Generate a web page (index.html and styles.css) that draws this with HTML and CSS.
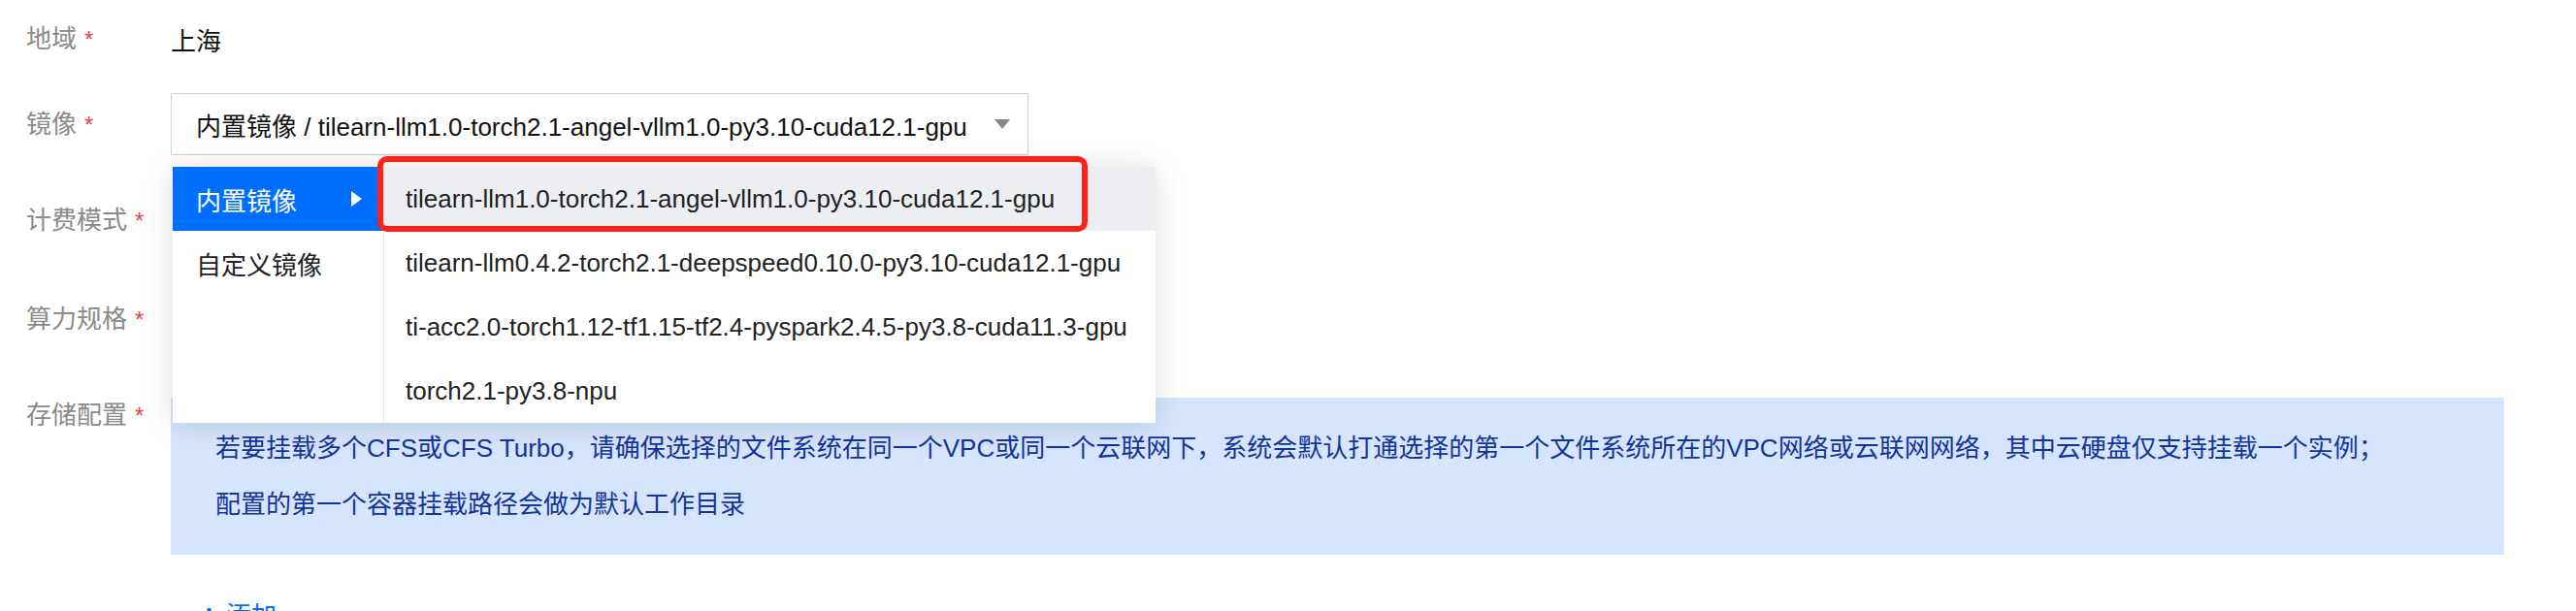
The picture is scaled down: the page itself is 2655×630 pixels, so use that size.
FILE: index.html
```html
<!DOCTYPE html>
<html lang="zh-CN">
<head>
<meta charset="utf-8">
<title>镜像选择</title>
<link rel="stylesheet" href="styles.css">
</head>
<body>
<form class="form">
  <div class="row row-region">
    <div class="label">地域<span class="req">*</span></div>
    <div class="value">上海</div>
  </div>

  <div class="row row-image">
    <div class="label">镜像<span class="req">*</span></div>
    <div class="select-wrap">
      <div class="select">
        <span class="select-text">内置镜像 / tilearn-llm1.0-torch2.1-angel-vllm1.0-py3.10-cuda12.1-gpu</span>
        <svg class="caret" width="16" height="10" viewBox="0 0 16 10"><polygon points="0,0 16,0 8,10" fill="#888"/></svg>
      </div>
      <div class="cascader">
        <ul class="menu menu-left">
          <li class="item active"><span>内置镜像</span><svg class="arrow" width="11" height="16" viewBox="0 0 11 16"><polygon points="0,0 11,8 0,16" fill="#fff"/></svg></li>
          <li class="item">自定义镜像</li>
        </ul>
        <ul class="menu menu-right">
          <li class="item hover">tilearn-llm1.0-torch2.1-angel-vllm1.0-py3.10-cuda12.1-gpu</li>
          <li class="item">tilearn-llm0.4.2-torch2.1-deepspeed0.10.0-py3.10-cuda12.1-gpu</li>
          <li class="item">ti-acc2.0-torch1.12-tf1.15-tf2.4-pyspark2.4.5-py3.8-cuda11.3-gpu</li>
          <li class="item">torch2.1-py3.8-npu</li>
        </ul>
        <div class="annot"></div>
      </div>
    </div>
  </div>

  <div class="row row-billing">
    <div class="label">计费模式<span class="req">*</span></div>
  </div>

  <div class="row row-spec">
    <div class="label">算力规格<span class="req">*</span></div>
  </div>

  <div class="row row-storage">
    <div class="label">存储配置<span class="req">*</span></div>
    <div class="storage">
      <div class="notice">
        <p>若要挂载多个CFS或CFS Turbo，请确保选择的文件系统在同一个VPC或同一个云联网下，系统会默认打通选择的第一个文件系统所在的VPC网络或云联网网络，其中云硬盘仅支持挂载一个实例；</p>
        <p>配置的第一个容器挂载路径会做为默认工作目录</p>
      </div>
      <a class="add" href="#"><svg class="plus" width="17" height="17" viewBox="0 0 17 17"><rect x="6.5" y="0" width="4" height="17" fill="#006eff"/><rect x="0" y="6.5" width="17" height="4" fill="#006eff"/></svg><span>添加</span></a>
    </div>
  </div>
</form>
</body>
</html>
```

FILE: styles.css
```css
* {
  box-sizing: border-box;
  margin: 0;
  padding: 0;
}

html, body {
  background: #fff;
}

body {
  width: 2655px;
  height: 630px;
  overflow: hidden;
  font-family: "Liberation Sans", "Noto Sans CJK SC", sans-serif;
  font-size: 26px;
  color: #000;
}

.form {
  display: flex;
  flex-direction: column;
  padding: 0 74px 0 27px;
}

.row {
  display: flex;
  align-items: center;
}

.label {
  width: 149px;
  flex: none;
  color: #8a8a8a;
  line-height: 36px;
  white-space: nowrap;
}

.req {
  color: #e54545;
  margin-left: 8px;
  font-size: 24px;
  vertical-align: 0;
}

.row-region {
  height: 80px;
}

.value {
  color: #111;
}

.row-image {
  margin-top: 16px;
  height: 64px;
}

.row-billing {
  margin-top: 34px;
  height: 66px;
}

.row-spec {
  margin-top: 36px;
  height: 66px;
}

.row-storage {
  margin-top: 48px;
  align-items: flex-start;
}

/* select */
.select-wrap {
  position: relative;
  width: 884px;
  height: 64px;
}

.select {
  height: 64px;
  display: flex;
  align-items: center;
  border: 1px solid #ccd2db;
  background: #fff;
  padding: 0 18px 0 25px;
  color: #111;
  white-space: nowrap;
}

.caret {
  margin-left: auto;
  flex: none;
}

/* cascader dropdown */
.cascader {
  position: absolute;
  top: 76px;
  left: 2px;
  z-index: 10;
  width: 1013px;
  height: 264px;
  display: flex;
  background: #fff;
  box-shadow: 0 2px 30px rgba(0, 0, 0, 0.14);
}

.menu {
  list-style: none;
}

.menu-left {
  width: 218px;
  flex: none;
  border-right: 1px solid #e4e6ea;
}

.menu-right {
  flex: 1;
}

.item {
  height: 66px;
  display: flex;
  align-items: center;
  color: #222;
  white-space: nowrap;
}

.menu-left .item {
  padding: 0 22px 0 24px;
  justify-content: space-between;
}

.menu-left .item.active {
  background: #006eff;
  color: #fff;
}

.menu-right .item {
  padding-left: 22px;
}

.menu-right .item.hover {
  background: #eceef2;
}

.annot {
  position: absolute;
  left: 211px;
  top: -11px;
  width: 732px;
  height: 78px;
  border: 6px solid #ff2016;
  border-radius: 10px;
  pointer-events: none;
}

/* storage */
.storage {
  flex: 1;
  display: flex;
  flex-direction: column;
}

.notice {
  background: #d5e5fd;
  color: #13349b;
  line-height: 58px;
  padding: 23px 0 23px 46px;
  white-space: nowrap;
}

.add {
  margin-top: 50px;
  padding-left: 31px;
  display: flex;
  align-items: center;
  gap: 9px;
  color: #006eff;
  text-decoration: none;
  line-height: 26px;
}

.plus {
  flex: none;
}
```
